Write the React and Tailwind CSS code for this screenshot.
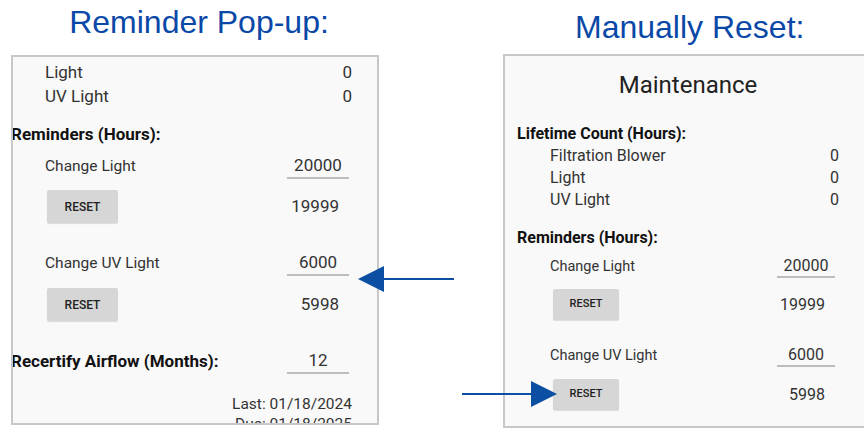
import React from "react";

const roboto = { fontFamily: "Roboto, 'Noto Sans', sans-serif" };

function Btn({ small }) {
  return (
    <div
      className={
        "flex items-center justify-center bg-[#d6d6d6] rounded-[2px] shadow-[0_1px_1px_rgba(0,0,0,0.12)] font-medium text-[#222] " +
        (small ? "w-[66px] h-[31px] text-[11px]" : "w-[71px] h-[33px] text-[12px]")
      }
    >
      RESET
    </div>
  );
}

export default function App() {
  return (
    <div
      className="relative flex w-[864px] h-[428px] overflow-hidden bg-white"
      style={roboto}
    >
      {/* Left column */}
      <div className="ml-[11px] w-[368px] shrink-0 flex flex-col">
        <div className="h-[55px] pt-[6px] pl-[8px] text-center text-[32px] leading-[32px] text-[#0a48a8] font-['Liberation_Sans',Arial,sans-serif]">
          Reminder Pop-up:
        </div>
        <div className="h-[370px] border-2 border-[#c8c8c8] bg-[#f9f9f9] overflow-hidden text-[17px] text-[#333]">
          <div className="pt-[3px]">
            <div className="flex justify-between h-[24px] leading-[24px] pl-[32px] pr-[25px]">
              <span>Light</span>
              <span>0</span>
            </div>
            <div className="flex justify-between h-[24px] leading-[24px] pl-[32px] pr-[25px]">
              <span>UV Light</span>
              <span>0</span>
            </div>
            <div className="mt-[14px] h-[24px] leading-[24px] ml-[-2px] font-bold text-[#111]">
              Reminders (Hours):
            </div>
            <div className="mt-[8px] flex justify-between items-start h-[24px] pl-[32px] pr-[28px]">
              <span className="leading-[24px] text-[15.5px]">Change Light</span>
              <span className="w-[62px] h-[25px] leading-[22px] text-center border-b-2 border-[#bdbdbd]">20000</span>
            </div>
            <div className="mt-[12px] flex items-center justify-between pl-[34px] pr-[38px]">
              <Btn />
              <span>19999</span>
            </div>
            <div className="mt-[28px] flex justify-between items-start h-[24px] pl-[32px] pr-[28px]">
              <span className="leading-[24px] text-[15.5px]">Change UV Light</span>
              <span className="w-[62px] h-[25px] leading-[22px] text-center border-b-2 border-[#bdbdbd]">6000</span>
            </div>
            <div className="mt-[13px] flex items-center justify-between pl-[34px] pr-[38px]">
              <Btn />
              <span>5998</span>
            </div>
            <div className="mt-[28px] flex justify-between items-start h-[24px] pr-[28px]">
              <span className="leading-[24px] ml-[-2px] font-bold text-[#111]">Recertify Airflow (Months):</span>
              <span className="w-[62px] h-[25px] leading-[22px] text-center border-b-2 border-[#bdbdbd]">12</span>
            </div>
            <div className="mt-[21px] pr-[25px] text-right text-[15.5px] leading-[20px]">
              <div>Last: 01/18/2024</div>
              <div>Due: 01/18/2025</div>
            </div>
          </div>
        </div>
      </div>

      {/* Right column */}
      <div className="ml-[124px] w-[400px] shrink-0 flex flex-col">
        <div className="h-[56px] pt-[11px] pl-[72px] text-left text-[32px] leading-[32px] text-[#0a48a8] font-['Liberation_Sans',Arial,sans-serif] whitespace-nowrap">
          Manually Reset:
        </div>
        <div className="h-[390px] border-2 border-[#c8c8c8] bg-[#f9f9f9] overflow-hidden text-[16px] text-[#333]">
          <div className="w-[334px] pt-[15px]">
            <div className="h-[28px] leading-[28px] text-[24px] text-center text-[#222] pl-[32px]">
              Maintenance
            </div>
            <div className="mt-[24px] h-[22px] leading-[22px] pl-[12px] font-bold text-[#111]">
              Lifetime Count (Hours):
            </div>
            <div className="flex justify-between h-[22px] leading-[22px] pl-[45px]">
              <span>Filtration Blower</span>
              <span>0</span>
            </div>
            <div className="flex justify-between h-[22px] leading-[22px] pl-[45px]">
              <span>Light</span>
              <span>0</span>
            </div>
            <div className="flex justify-between h-[22px] leading-[22px] pl-[45px]">
              <span>UV Light</span>
              <span>0</span>
            </div>
            <div className="mt-[16px] h-[22px] leading-[22px] pl-[12px] font-bold text-[#111]">
              Reminders (Hours):
            </div>
            <div className="mt-[7px] flex justify-between items-start h-[22px] pl-[45px] pr-[4px]">
              <span className="leading-[22px] text-[14.5px]">Change Light</span>
              <span className="w-[58px] h-[22px] leading-[20px] text-center border-b-2 border-[#bdbdbd]">20000</span>
            </div>
            <div className="mt-[11px] flex items-center justify-between pl-[48px] pr-[14px]">
              <Btn small />
              <span>19999</span>
            </div>
            <div className="mt-[25px] flex justify-between items-start h-[22px] pl-[45px] pr-[4px]">
              <span className="leading-[22px] text-[14.5px]">Change UV Light</span>
              <span className="w-[58px] h-[22px] leading-[20px] text-center border-b-2 border-[#bdbdbd]">6000</span>
            </div>
            <div className="mt-[12px] flex items-center justify-between pl-[48px] pr-[14px]">
              <Btn small />
              <span>5998</span>
            </div>
          </div>
        </div>
      </div>

      {/* Arrows overlay */}
      <svg
        className="absolute inset-0 pointer-events-none"
        width="864"
        height="428"
        viewBox="0 0 864 428"
      >
        <line x1="383" y1="279" x2="454" y2="279" stroke="#0b4ea2" strokeWidth="2" />
        <polygon points="358,279 384,266 384,292" fill="#0b4ea2" />
        <line x1="462" y1="394" x2="532" y2="394" stroke="#0b4ea2" strokeWidth="2" />
        <polygon points="557,394 531,381 531,407" fill="#0b4ea2" />
      </svg>
    </div>
  );
}
